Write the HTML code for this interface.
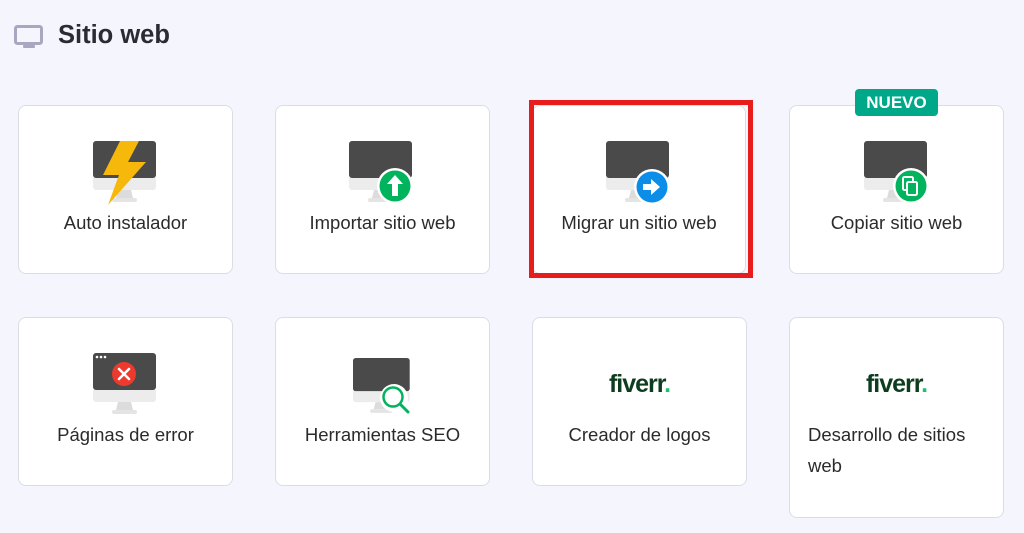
<!DOCTYPE html>
<html><head><meta charset="utf-8"><style>
body{margin:0;width:1024px;height:533px;background:#f4f5fd;font-family:"Liberation Sans",sans-serif;position:relative;overflow:hidden;color:#2f1c6a}
.card{position:absolute;background:#fff;border:1px solid #dcdce6;border-radius:8px;box-sizing:border-box;width:215px;height:169px}
.lbl{position:absolute;left:0;right:0;text-align:center;font-size:18.5px;color:#2b2b2b}
svg{position:absolute}
.red{position:absolute;left:529px;top:100px;width:224px;height:178px;border:5px solid #e91c1c;box-sizing:border-box}
.fv{position:absolute;left:0;right:0;text-align:center;font-weight:bold;font-size:25px;color:#0d3d1e;letter-spacing:-1px;top:52px}
.fv span{color:#1dbf73}
</style></head><body>
<svg style="left:14px;top:25px" width="30" height="25" viewBox="0 0 30 25"><rect x="1.5" y="1.5" width="26" height="17" rx="2" fill="none" stroke="#a9a7bf" stroke-width="3"/><rect x="9" y="20" width="12" height="3" rx="1" fill="#a9a7bf"/></svg>
<div style="position:absolute;left:58px;top:21px;font-size:25.5px;font-weight:bold;color:#2b2b33">Sitio web</div>

<div class="card" style="left:18px;top:105px"><div class="lbl" style="top:106px">Auto instalador</div></div>
<div class="card" style="left:275px;top:105px"><div class="lbl" style="top:106px">Importar sitio web</div></div>
<div class="card" style="left:532px;top:105px;width:214px"><div class="lbl" style="top:106px">Migrar un sitio web</div></div>
<div class="card" style="left:789px;top:105px"><div class="lbl" style="top:106px">Copiar sitio web</div></div>
<div class="red"></div>
<div style="position:absolute;left:855px;top:89px;width:83px;height:27px;background:#00a88a;border-radius:4px;color:#fff;font-weight:bold;font-size:17px;text-align:center;line-height:27px">NUEVO</div>

<div class="card" style="left:18px;top:317px"><div class="lbl" style="top:106px">Páginas de error</div></div>
<div class="card" style="left:275px;top:317px"><div class="lbl" style="top:106px">Herramientas SEO</div></div>
<div class="card" style="left:532px;top:317px"><div class="fv">fiverr<span>.</span></div><div class="lbl" style="top:106px">Creador de logos</div></div>
<div class="card" style="left:789px;top:317px;height:201px"><div class="fv">fiverr<span>.</span></div><div class="lbl" style="top:101px;text-align:left;left:18px;line-height:31px">Desarrollo de sitios<br>web</div></div>

<svg width="1024" height="533" style="left:0;top:0">
<defs><g id="m"><rect x="0" y="0" width="63" height="37" rx="3" fill="#4a4a4a"/><path d="M0 37h63v9a3 3 0 0 1-3 3H3a3 3 0 0 1-3-3z" fill="#ececec"/><path d="M25 49h13l2 8H23z" fill="#dcdcdc"/><rect x="19" y="57" width="25" height="4" rx="2" fill="#e4e4e4"/></g></defs>
<use href="#m" x="93" y="141"/>
<polygon points="120,141 139,141 128,162 146,162 108,205 119,175 103,175" fill="#f5b80b"/>
<use href="#m" x="349" y="141"/>
<circle cx="395" cy="186" r="18" fill="#fff"/><circle cx="395" cy="186" r="15.5" fill="#00b35c"/>
<path d="M395 175l-8 9h5v12h6v-12h5z" fill="#fff"/>
<use href="#m" x="606" y="141"/>
<circle cx="652" cy="187" r="18" fill="#fff"/><circle cx="652" cy="187" r="15.5" fill="#0b8de8"/>
<path d="M643 184h8v-5l9 8-9 8v-5h-8z" fill="#fff"/>
<use href="#m" x="864" y="141"/>
<circle cx="911" cy="186" r="18" fill="#fff"/><circle cx="911" cy="186" r="15.5" fill="#00b35c"/>
<rect x="903" y="177" width="10" height="13" rx="1.5" fill="none" stroke="#fff" stroke-width="2"/><rect x="907" y="182" width="10" height="13" rx="1.5" fill="#00b35c" stroke="#fff" stroke-width="2"/>
<use href="#m" x="93" y="353" />
<circle cx="97" cy="357" r="1.3" fill="#fff"/><circle cx="101" cy="357" r="1.3" fill="#fff"/><circle cx="105" cy="357" r="1.3" fill="#fff"/>
<circle cx="124" cy="374" r="12" fill="#ec3a2e"/><path d="M119 369l10 10M129 369l-10 10" stroke="#fff" stroke-width="2.5" stroke-linecap="round"/>
<g transform="translate(353,358) scale(0.9)"><use href="#m"/></g>
<circle cx="394" cy="398" r="14" fill="#fff"/><circle cx="393" cy="397" r="9.5" fill="none" stroke="#00b35c" stroke-width="2.5"/><path d="M400 404l8 8" stroke="#00b35c" stroke-width="3" stroke-linecap="round"/>
</svg>
</body></html>
